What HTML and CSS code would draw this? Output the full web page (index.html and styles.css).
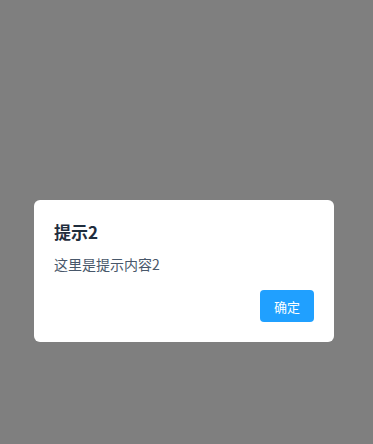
FILE: index.html
```html
<!DOCTYPE html>
<html lang="zh">
<head>
<meta charset="utf-8">
<link rel="stylesheet" href="styles.css">
</head>
<body>
<div class="mask">
  <div class="dialog">
    <div class="title">提示2</div>
    <div class="content">这里是提示内容2</div>
    <div class="footer">
      <button class="btn">确定</button>
    </div>
  </div>
</div>
</body>
</html>
```
FILE: styles.css
```css
html, body {
  margin: 0;
  padding: 0;
  height: 100%;
}
body {
  background: #7f7f7f;
  font-family: "Noto Sans CJK SC", "Noto Sans", sans-serif;
}
.mask {
  padding: 200px 0 0 34px;
  display: flex;
  align-items: flex-start;
}
.dialog {
  width: 300px;
  box-sizing: border-box;
  background: #fff;
  border-radius: 6px;
  padding: 20px;
  display: flex;
  flex-direction: column;
}
.title {
  font-size: 17px;
  font-weight: bold;
  line-height: 24px;
  color: #1f2d3d;
}
.content {
  margin-top: 10px;
  font-size: 14px;
  line-height: 20px;
  color: #48576a;
}
.footer {
  margin-top: 16px;
  display: flex;
  justify-content: flex-end;
}
.btn {
  width: 54px;
  height: 32px;
  border: none;
  border-radius: 4px;
  background: #20a0ff;
  color: #fff;
  font-family: inherit;
  font-size: 13px;
  padding: 0;
}
```
